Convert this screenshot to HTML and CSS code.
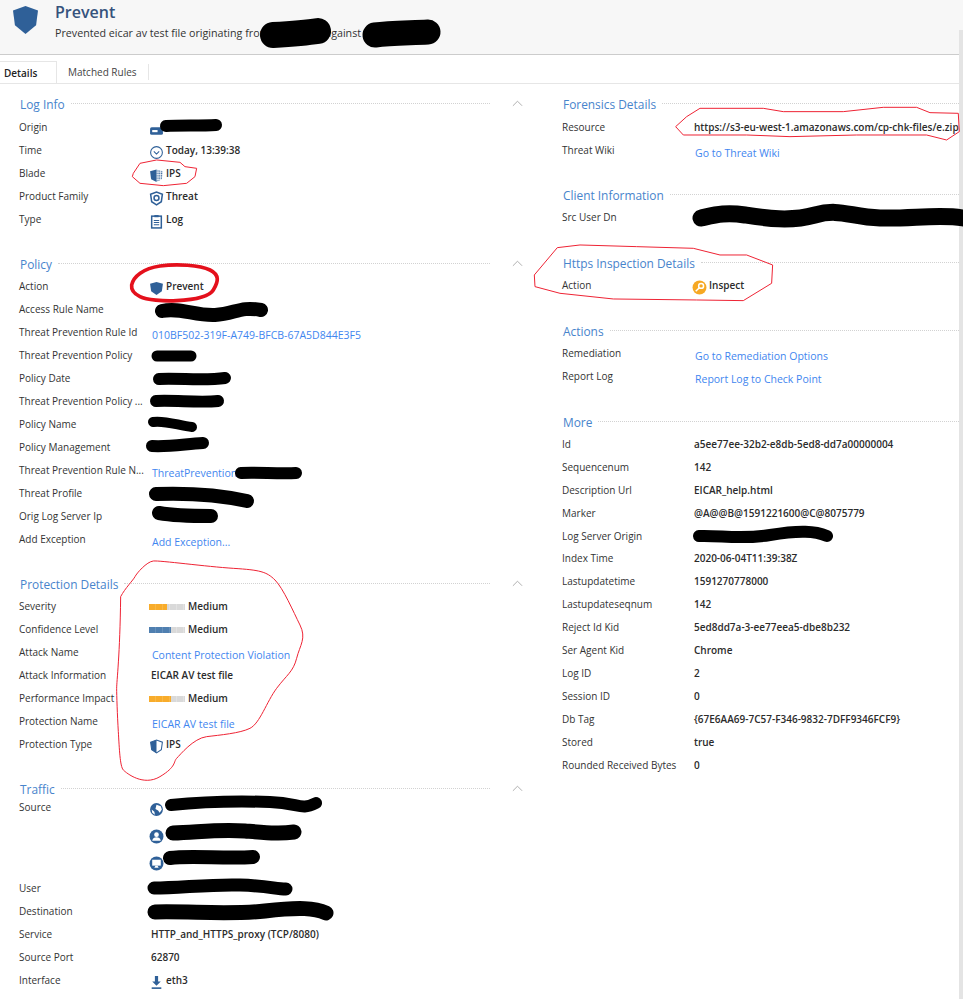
FILE: index.html
```html
<!DOCTYPE html>
<html lang="en">
<head>
<meta charset="utf-8">
<title>Prevent - Log Details</title>
<link rel="stylesheet" href="styles.css">
</head>
<body>
<div class="page">
  <header class="top">
    <svg class="top-icon" viewBox="0 0 26 29"><path class="blue" d="M0 4.500L13 0l13 4.500-2 15.500L13 29 2 20z"/></svg>
    <div>
      <h1>Prevent</h1>
      <p>Prevented eicar av test file originating from <span class="gap1"></span>against</p>
    </div>
  </header>
  <nav class="tabs">
    <span class="tab active">Details</span>
    <span class="tab second">Matched Rules</span>
  </nav>
  <main class="cols">
    <div class="col left">
      <section class="sec">
        <div class="head"><h2>Log Info</h2><i class="dots"></i><svg class="chev" viewBox="0 0 12 7"><path d="M1 6l5-5 5 5"/></svg></div>
        <div class="row"><span class="lab">Origin</span><span class="val"><svg class="ic" viewBox="0 0 14 14"><rect class="blue" x="1" y="5" width="12" height="7" rx="1.500"/><rect class="white" x="3" y="7.500" width="5" height="2"/></svg></span></div>
        <div class="row"><span class="lab">Time</span><span class="val"><svg class="ic" viewBox="0 0 14 14"><circle class="line" cx="7" cy="7" r="5.500"/><path class="line" d="M4.500 6L7 8.500 9.500 6"/></svg>Today, 13:39:38</span></div>
        <div class="row"><span class="lab">Blade</span><span class="val"><svg class="ic" viewBox="0 0 14 14"><defs><pattern id="stripes" width="1.600" height="1.600" patternUnits="userSpaceOnUse"><rect width="1" height="1" fill="#2f6098"/></pattern></defs><path class="blue" d="M1 3l6-1.500V13L2 10.500z"/><path fill="url(#stripes)" d="M7 1.500L13 3l-1 7.500L7 13z"/></svg>IPS</span></div>
        <div class="row"><span class="lab">Product Family</span><span class="val"><svg class="ic" viewBox="0 0 14 14"><path class="line heavy" d="M1.500 3l5.500-2 5.500 2-1 7L7 13l-4.500-3z"/><circle class="line heavy" cx="7" cy="6.500" r="2.300"/></svg>Threat</span></div>
        <div class="row"><span class="lab">Type</span><span class="val"><svg class="ic" viewBox="0 0 14 14"><rect class="line heavy" x="2.500" y="2" width="9" height="11"/><rect class="blue" x="5" y="1" width="4" height="2"/><path class="line" d="M4.500 6h5M4.500 8h5M4.500 10h5"/></svg>Log</span></div>
      </section>
      <section class="sec">
        <div class="head"><h2>Policy</h2><i class="dots"></i><svg class="chev" viewBox="0 0 12 7"><path d="M1 6l5-5 5 5"/></svg></div>
        <div class="row"><span class="lab">Action</span><span class="val"><svg class="ic" viewBox="0 0 14 14"><path class="blue" d="M1 2.500L7 1l6 1.500L12 9.500 7 13 2 9.500z"/></svg>Prevent</span></div>
        <div class="row"><span class="lab">Access Rule Name</span></div>
        <div class="row"><span class="lab">Threat Prevention Rule Id</span><a class="link">010BF502-319F-A749-BFCB-67A5D844E3F5</a></div>
        <div class="row"><span class="lab">Threat Prevention Policy</span></div>
        <div class="row"><span class="lab">Policy Date</span></div>
        <div class="row"><span class="lab">Threat Prevention Policy ...</span></div>
        <div class="row"><span class="lab">Policy Name</span></div>
        <div class="row"><span class="lab">Policy Management</span></div>
        <div class="row"><span class="lab">Threat Prevention Rule N...</span><a class="link">ThreatPrevention</a></div>
        <div class="row"><span class="lab">Threat Profile</span></div>
        <div class="row"><span class="lab">Orig Log Server Ip</span></div>
        <div class="row"><span class="lab">Add Exception</span><a class="link">Add Exception...</a></div>
      </section>
      <section class="sec">
        <div class="head"><h2>Protection Details</h2><i class="dots"></i><svg class="chev" viewBox="0 0 12 7"><path d="M1 6l5-5 5 5"/></svg></div>
        <div class="row"><span class="lab">Severity</span><span class="val"><span class="bar"><b class="fill orange" style="width:18px"></b></span>Medium</span></div>
        <div class="row"><span class="lab">Confidence Level</span><span class="val"><span class="bar"><b class="fill steel" style="width:22px"></b></span>Medium</span></div>
        <div class="row"><span class="lab">Attack Name</span><a class="link">Content Protection Violation</a></div>
        <div class="row"><span class="lab">Attack Information</span><span class="val plain">EICAR AV test file</span></div>
        <div class="row"><span class="lab">Performance Impact</span><span class="val"><span class="bar"><b class="fill orange" style="width:22px"></b></span>Medium</span></div>
        <div class="row"><span class="lab">Protection Name</span><a class="link">EICAR AV test file</a></div>
        <div class="row"><span class="lab">Protection Type</span><span class="val"><svg class="ic" viewBox="0 0 14 14"><path class="line" d="M1.500 3l5.500-2 5.500 2-1 7L7 13l-4.500-3z"/><path class="blue" d="M1.500 3L7 1v12l-4.500-3z"/></svg>IPS</span></div>
      </section>
      <section class="sec traffic">
        <div class="head"><h2>Traffic</h2><i class="dots"></i><svg class="chev" viewBox="0 0 12 7"><path d="M1 6l5-5 5 5"/></svg></div>
        <div class="row tall"><span class="lab">Source</span><span class="val"><svg class="ic" viewBox="0 0 14 14"><circle class="blue" cx="7" cy="7" r="6"/><path class="white" d="M7 2.500l4 1.500 1 3-2 3-1.500-2-2.500-1.500zM2.500 7L5 9l.5 3L3 10z"/></svg></span></div>
        <div class="row tall"><span class="lab"></span><span class="val"><svg class="ic" viewBox="0 0 14 14"><circle class="blue" cx="7" cy="7" r="6.500"/><circle class="white" cx="7" cy="5.300" r="2.200"/><path class="white" d="M3 11c.5-2.500 2-3.300 4-3.300s3.500.8 4 3.300z"/></svg></span></div>
        <div class="row tall"><span class="lab"></span><span class="val"><svg class="ic" viewBox="0 0 14 14"><circle class="blue" cx="7" cy="7" r="6.500"/><rect class="white" x="3" y="3.500" width="8" height="5.500"/><path class="white" d="M5 11l1-2h2l1 2z"/></svg></span></div>
        <div class="row plain-gap"><span class="lab">User</span></div>
        <div class="row"><span class="lab">Destination</span></div>
        <div class="row"><span class="lab">Service</span><span class="val plain">HTTP_and_HTTPS_proxy (TCP/8080)</span></div>
        <div class="row"><span class="lab">Source Port</span><span class="val plain">62870</span></div>
        <div class="row"><span class="lab">Interface</span><span class="val"><svg class="ic" viewBox="0 0 14 14"><path class="blue" d="M5.500 1h3v5H11L7 10 3 6h2.500z"/><rect class="blue" x="2.500" y="11.500" width="9" height="1.500"/></svg>eth3</span></div>
      </section>
    </div>
    <div class="col right">
      <section class="sec first">
        <div class="head"><h2>Forensics Details</h2><i class="dots"></i></div>
        <div class="row"><span class="lab">Resource</span><span class="val plain">https://s3-eu-west-1.amazonaws.com/cp-chk-files/e.zip</span></div>
        <div class="row"><span class="lab">Threat Wiki</span><a class="link">Go to Threat Wiki</a></div>
      </section>
      <section class="sec">
        <div class="head"><h2>Client Information</h2><i class="dots"></i></div>
        <div class="row"><span class="lab">Src User Dn</span></div>
      </section>
      <section class="sec">
        <div class="head"><h2>Https Inspection Details</h2><i class="dots"></i></div>
        <div class="row"><span class="lab">Action</span><span class="val"><svg class="ic" viewBox="0 0 14 14"><circle class="amber" cx="7" cy="7" r="6.500"/><circle class="key" cx="8.500" cy="5.500" r="2.300"/><path class="key" d="M6.800 7.200L3.500 10.500"/></svg>Inspect</span></div>
      </section>
      <section class="sec">
        <div class="head"><h2>Actions</h2><i class="dots"></i></div>
        <div class="row"><span class="lab">Remediation</span><a class="link">Go to Remediation Options</a></div>
        <div class="row"><span class="lab">Report Log</span><a class="link">Report Log to Check Point</a></div>
      </section>
      <section class="sec more">
        <div class="head"><h2>More</h2><i class="dots"></i></div>
        <div class="row"><span class="lab">Id</span><span class="val plain">a5ee77ee-32b2-e8db-5ed8-dd7a00000004</span></div>
        <div class="row"><span class="lab">Sequencenum</span><span class="val plain">142</span></div>
        <div class="row"><span class="lab">Description Url</span><span class="val plain">EICAR_help.html</span></div>
        <div class="row"><span class="lab">Marker</span><span class="val plain">@A@@B@1591221600@C@8075779</span></div>
        <div class="row"><span class="lab">Log Server Origin</span></div>
        <div class="row"><span class="lab">Index Time</span><span class="val plain">2020-06-04T11:39:38Z</span></div>
        <div class="row"><span class="lab">Lastupdatetime</span><span class="val plain">1591270778000</span></div>
        <div class="row"><span class="lab">Lastupdateseqnum</span><span class="val plain">142</span></div>
        <div class="row"><span class="lab">Reject Id Kid</span><span class="val plain">5ed8dd7a-3-ee77eea5-dbe8b232</span></div>
        <div class="row"><span class="lab">Ser Agent Kid</span><span class="val plain">Chrome</span></div>
        <div class="row"><span class="lab">Log ID</span><span class="val plain">2</span></div>
        <div class="row"><span class="lab">Session ID</span><span class="val plain">0</span></div>
        <div class="row"><span class="lab">Db Tag</span><span class="val plain">{67E6AA69-7C57-F346-9832-7DFF9346FCF9}</span></div>
        <div class="row"><span class="lab">Stored</span><span class="val plain">true</span></div>
        <div class="row"><span class="lab">Rounded Received Bytes</span><span class="val plain">0</span></div>
      </section>
    </div>
  </main>
  <div class="scrollbar"></div>
  <svg class="marks" viewBox="0 0 963 999">
    <g class="ink">
      <path stroke-width="26" d="M273 35C290 34 305 33 318 31"/>
      <path stroke-width="25" d="M375 35C390 33 410 33 428 32"/>
      <path stroke-width="12" d="M166 126C180 125 200 126 216 125"/>
      <path stroke-width="14" d="M162 311C180 307 195 316 215 315S240 306 261 310"/>
      <path stroke-width="11" d="M157 356H191"/>
      <path stroke-width="12" d="M159 379C180 378 205 381 225 378"/>
      <path stroke-width="12" d="M156 401C175 400 200 403 218 401"/>
      <path stroke-width="10" d="M153 422C165 420 180 426 192 427"/>
      <path stroke-width="12" d="M152 446C170 447 185 444 203 443"/>
      <path stroke-width="12" d="M241 473C255 472 280 474 296 473"/>
      <path stroke-width="14" d="M156 494C185 493 220 495 247 501"/>
      <path stroke-width="14" d="M159 513C170 515 195 516 211 516"/>
      <path stroke-width="12" d="M171 805C200 802 240 801 270 802S300 811 316 803"/>
      <path stroke-width="15" d="M173 833C200 832 220 829 245 831S280 834 294 832"/>
      <path stroke-width="14" d="M170 858C190 855 225 859 253 857"/>
      <path stroke-width="13" d="M154 888C180 888 210 884 240 885S275 889 286 889"/>
      <path stroke-width="15" d="M155 912C190 911 230 915 265 911S315 908 326 913"/>
      <path stroke-width="17" d="M701 218C715 215 725 212 745 215S790 222 815 215S850 217 880 218S940 214 963 218"/>
      <path stroke-width="12" d="M699 536C720 535 740 540 770 535S815 531 827 536"/>
    </g>
    <g class="red">
      <path transform="scale(.3333)" d="M397 530L400 520 420 490 470 480 540 487 555 500 590 505 585 530 560 550 490 557 420 550z"/>
      <path class="thick" transform="translate(0 250) scale(.3333)" d="M395 105C400 80 430 55 480 48S600 45 630 60 655 95 640 120 570 150 530 152 440 150 420 140 393 120 395 105z"/>
      <path transform="translate(480 0) scale(.3333)" d="M587 380L620 350 660 325 850 325 910 335 1090 335 1210 322 1310 322 1350 338 1435 340 1438 395 1400 420 1340 405 1130 405 930 410 800 405 610 405z"/>
      <path transform="translate(480 0) scale(.3333)" d="M163 825L232 743 300 735 470 740 640 745 720 765 800 765 878 795 875 850 790 902 650 900 400 897 240 880 165 860z"/>
      <path transform="translate(0 555) scale(.3333)" d="M362 125C375 100 400 75 405 65S440 20 460 18 620 35 700 40 800 50 825 75 880 170 900 210 900 270 890 310 860 360 830 400 780 505 750 520 660 540 620 545 540 600 530 610 530 635 480 665 380 655 370 645 358 580 355 530 350 420 350 400 360 300 362 125z"/>
    </g>
  </svg>
</div>
</body>
</html>
```
FILE: styles.css
```css
* { box-sizing: border-box; }
html, body { margin: 0; padding: 0; background: #fff; }
.page {
  position: relative;
  width: 963px;
  height: 999px;
  overflow: hidden;
  font-family: "Open Sans", "Noto Sans", sans-serif;
  font-size: 10px;
  color: #333;
}
.top {
  display: flex;
  gap: 17px;
  height: 55px;
  padding: 6px 0 0 13px;
  background: #f7f7f7;
  border-bottom: 1px solid #ccc;
}
.top-icon { width: 25px; height: 28px; flex: none; }
.top h1 { margin: -5px 0 0; font-size: 16px; line-height: 22px; font-weight: 600; color: #35527c; }
.top p { margin: 3px 0 0; font-size: 10.700px; line-height: 15px; color: #333; }
.gap1 { display: inline-block; width: 53px; }
.tabs {
  display: flex;
  align-items: flex-start;
  height: 29px;
  border-bottom: 1px solid #e6e6e6;
}
.tab { display: flex; align-items: center; font-size: 10px; color: #444; }
.tab.active { width: 57px; padding: 0 0 0 4px; margin-top: 6px; height: 23px; font-weight: 600; color: #222; border-top: 1px solid #e6e6e6; border-right: 1px solid #e6e6e6; }
.tab.second { margin-top: 9px; height: 16px; padding: 0 11px; border-right: 1px solid #e6e6e6; }
.cols { display: grid; grid-template-columns: 562px 1fr; padding-top: 10px; }
.left { padding: 0 0 0 19px; }
.right { padding-right: 5px; }
.sec { margin-bottom: 23px; }
.right .sec { margin-bottom: 24px; }
.right .sec.first { margin-bottom: 23px; }
.sec:first-child .head { padding-bottom: 2px; }
.head { display: flex; align-items: center; height: 21px; gap: 6px; margin-left: 1px; padding-right: 40px; }
.right .head { padding-right: 0; }
.more .head { margin-bottom: .4px; }
.head h2 { margin: 0; font-size: 11.900px; font-weight: 400; color: #4884cc; white-space: nowrap; }
.dots { flex: 1; border-top: 1px dotted #d2d2d2; }
.chev { width: 11px; height: 7px; margin-left: 16px; margin-right: -1px; flex: none; }
.chev path { fill: none; stroke: #a8a8a8; stroke-width: 1; }
.row { display: flex; align-items: center; height: 23px; }
.more .row { height: 22.930px; }
.lab { width: 132px; flex: none; white-space: nowrap; color: #333; }
.val { display: flex; align-items: center; font-weight: 600; color: #2b2b2b; white-space: nowrap; margin-left: -2px; }
.val.plain { margin-left: 0; }
.link { color: #3f86ef; font-size: 10.500px; padding: 6px 0 0 1px; white-space: nowrap; }
.ic { width: 15px; height: 15px; margin: 5px 2px 0 0; flex: none; }
.blue { fill: #2f6098; }
.white { fill: #fff; }
.line { fill: none; stroke: #2f6098; stroke-width: 1; }
.line.heavy { stroke-width: 1.400; }
.amber { fill: #f6a823; }
.key { fill: none; stroke: #fff; stroke-width: 1.400; }
.bar { display: block; width: 36px; height: 6px; margin: 2px 3px 0 0; background: repeating-linear-gradient(to right, #d9d9d9 0 6px, #e2e2e2 6px 7px); }
.fill { display: block; height: 6px; }
.orange { background: repeating-linear-gradient(to right, #f8ac2b 0 6px, #f9b845 6px 7px); }
.steel { background: repeating-linear-gradient(to right, #4f7fb0 0 6px, #6690bb 6px 7px); }
.traffic .head { margin-bottom: -6px; }
.tall { height: 27px; }
.plain-gap { margin-top: 2px; }
.scrollbar { position: absolute; top: 30px; right: 0; width: 4px; bottom: 0; background: #e4e4e4; }
.marks { position: absolute; inset: 0; width: 963px; height: 999px; pointer-events: none; }
.ink path { fill: none; stroke: #000; stroke-linecap: round; stroke-linejoin: round; }
.red path { fill: none; stroke: #ee2233; stroke-width: 3; }
.red path.thick { stroke-width: 11; stroke: #e4101c; }
```
